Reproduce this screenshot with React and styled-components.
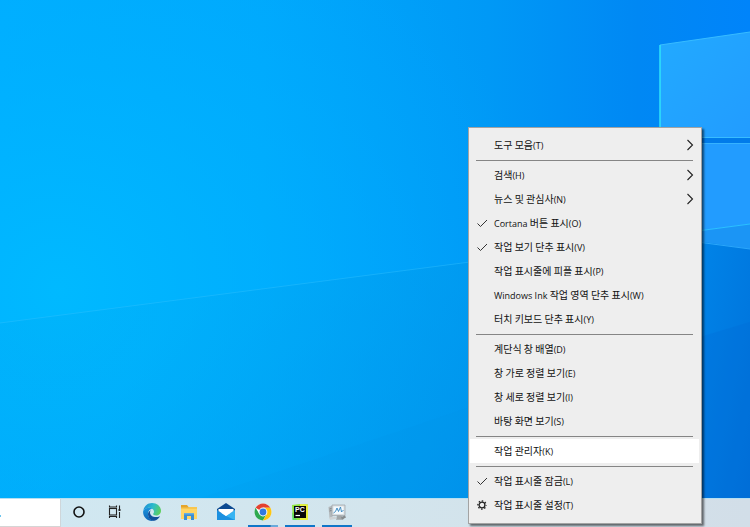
import React from 'react';
import styled, { createGlobalStyle } from 'styled-components';

const GlobalStyle = createGlobalStyle`
  * {
    box-sizing: border-box;
  }
  body {
    margin: 0;
    font-family: "Noto Sans CJK KR", "Noto Sans", sans-serif;
    overflow: hidden;
  }
`;

const Desktop = styled.div`
  position: relative;
  min-height: 100vh;
  display: flex;
  flex-direction: column;
  justify-content: flex-end;
`;

const Wallpaper = styled.svg`
  position: absolute;
  top: 0;
  left: 0;
  width: 100%;
  height: 100%;
`;

const Taskbar = styled.footer`
  position: relative;
  display: flex;
  height: 29px;
  background: linear-gradient(90deg, #d0e8f2, #d3e5ed 50%, #d2dee8);
  border-top: 1px solid #b5dff2;
`;

const SearchBox = styled.label`
  display: flex;
  align-items: center;
  width: 61px;
  background: #fff;
  border-right: 1px solid #cfd6da;
  border-bottom: 1px solid #d5d5d5;
`;

const SearchInput = styled.input`
  flex: 1;
  min-width: 0;
  border: none;
  outline: none;
  background: transparent;
`;

const TaskButton = styled.button`
  width: ${({$app}) => ($app ? '37px' : '36px')};
  padding: 0;
  border: none;
  background: transparent;
  display: flex;
  flex-direction: column;
  align-items: center;
  justify-content: flex-end;
  gap: 3px;
`;

const Running = styled.span`
  width: 30px;
  height: 2px;
  background: ${({$stacked, $on}) => {
    if (!$on) return 'transparent';
    return $stacked
      ? 'linear-gradient(90deg, #0f76c8 22px, #3f83b8 22px, #3f83b8 23px, #69aadb 23px)'
      : '#0f76c8';
  }};
`;

const Menu = styled.div`
  position: absolute;
  right: 48px;
  bottom: 3px;
  width: 234px;
  padding: 5px 2px 6px 1px;
  background: #eee;
  border: 1px solid #a3a3a3;
  box-shadow: 2px 2px 2px rgba(0, 0, 0, 0.55);
`;

const MenuItem = styled.button`
  display: grid;
  grid-template-columns: 24px 1fr 12px;
  align-items: center;
  width: 100%;
  height: 24px;
  padding: 0 4px 0 0;
  border: none;
  background: ${({$active}) => ($active ? '#fff' : 'transparent')};
  color: #111;
  font-family: inherit;
  font-size: 10px;
  line-height: 16px;
  text-align: left;
  white-space: nowrap;
`;

const Latin = styled.span`
  font-family: "Open Sans", sans-serif;
  font-size: 9px;
`;

const IconCell = styled.span`
  display: flex;
  justify-content: center;
`;

const Separator = styled.hr`
  height: 1px;
  margin: 3px 6px 2px 6px;
  border: none;
  background: #858585;
`;

const CheckIcon = () => (
  <svg width="12" height="12" viewBox="0 0 12 12" fill="none" stroke="#333" strokeWidth="1">
    <path d="M1.5 6.5L4.5 9.5L11 3" />
  </svg>
);

const ArrowIcon = () => (
  <svg width="12" height="12" viewBox="0 0 12 12" fill="none" stroke="#222" strokeWidth="1.1">
    <path d="M4.500 1L9.500 6L4.500 11" />
  </svg>
);

const GearIcon = () => (
  <svg width="12" height="12" viewBox="0 0 12 12" fill="none" stroke="#222">
    <circle cx="6" cy="6" r="2.9" strokeWidth="1.3" />
    <circle cx="6" cy="6" r="4.1" strokeWidth="1.3" strokeDasharray="1.5 1.72" strokeDashoffset="0.75" />
  </svg>
);

const CortanaIcon = () => (
  <svg width="20" height="20" viewBox="0 0 20 20" fill="none">
    <circle cx="10" cy="10" r="5" stroke="#111" strokeWidth="1.6" />
  </svg>
);

const TaskViewIcon = () => (
  <svg width="20" height="20" viewBox="0 0 20 20" fill="none" stroke="#222" strokeWidth="1.1">
    <rect x="4.5" y="6.5" width="7" height="6.5" />
    <path d="M4.5 3.5V5H11.5V3.5M4.5 16V14.5H11.5V16M14.5 3.5V7M14.5 10V16" />
    <rect x="13.5" y="7" width="2" height="2" fill="#222" stroke="none" />
  </svg>
);

const EdgeIcon = () => (
  <svg width="20" height="20" viewBox="0 0 20 20">
    <defs>
      <linearGradient id="edgeTop" x1="0" y1="0.3" x2="1" y2="0.6">
        <stop offset="0" stopColor="#1c8fd8" />
        <stop offset="0.5" stopColor="#2dbccb" />
        <stop offset="1" stopColor="#5fd05c" />
      </linearGradient>
      <linearGradient id="edgeSide" x1="0" y1="0" x2="0" y2="1">
        <stop offset="0" stopColor="#1b95de" />
        <stop offset="1" stopColor="#0f62b4" />
      </linearGradient>
    </defs>
    <path d="M1.2 9.5C1.6 4.5 5.3 1 10 1c5.200 0 9 3.700 9 7.700 0 3-2.300 4.800-4.900 4.800-1.900 0-3-.7-3-1.400 0-.6.9-.9.9-2.400C12 7.800 10 5.700 7 5.700c-2.800 0-4.900 1.600-5.800 3.800z" fill="url(#edgeTop)" />
    <path d="M1.100 9.500C2 7 4.300 5.700 7 5.700c1.400 0 2.500.4 3.400 1.100C7.800 7 6 9.200 6 11.800c0 3.500 2.500 6.400 6 7-.7.150-1.300.2-2 .2-5 0-9.200-4.300-8.900-9.500z" fill="url(#edgeSide)" />
    <path d="M8.800 8.200C7 9.200 6 10.500 6 12.200c0 3.700 3 6.600 6.300 6.600 2.400-.6 4.300-2.100 5.500-4 .2-.4-.1-.6-.5-.4-1 .5-2 .7-3.200.7-3.500 0-6.100-2-6.100-4.700 0-.8.300-1.600.8-2.200z" fill="#12509c" />
  </svg>
);

const ExplorerIcon = () => (
  <svg width="20" height="20" viewBox="0 0 20 20">
    <path d="M2 3h6l1.500 2H18v5H2z" fill="#e5a52c" />
    <path d="M2 6h16v11H2z" fill="#ffd566" />
    <path d="M2 5.500h7l1-.5h8v2H2z" fill="#f8c64f" />
    <path d="M5 18v-7h10v7h-3v-4H8v4z" fill="#3b8ed4" />
    <path d="M5 11h10v1.500H5z" fill="#64ade4" />
  </svg>
);

const MailIcon = () => (
  <svg width="20" height="20" viewBox="0 0 20 20">
    <path d="M1 7L10 1l9 6v4H1z" fill="#0c4a91" />
    <path d="M1 8v10h18V8l-9 6z" fill="#1b90e0" />
    <path d="M19 8v10L10 14z" fill="#36b4f2" />
    <path d="M2.500 7h15v2L10 14 2.500 9z" fill="#fff" />
  </svg>
);

const ChromeIcon = () => (
  <svg width="20" height="20" viewBox="0 0 20 20">
    <circle cx="10" cy="10" r="8.500" fill="#fff" />
    <path d="M10 10L2.640 5.750A8.500 8.500 0 0 1 17.360 5.750H10z" fill="#e3412f" />
    <path d="M2.640 5.750A8.500 8.500 0 0 0 10 18.500L13.680 12.120 10 10 6.320 12.120z" fill="#2da94f" />
    <path d="M17.360 5.750A8.500 8.500 0 0 1 10 18.500l3.680-6.380L10 5.750z" fill="#fdc613" />
    <circle cx="10" cy="10" r="4.400" fill="#fff" />
    <circle cx="10" cy="10" r="3.400" fill="#3079e0" />
  </svg>
);

const PyCharmIcon = () => (
  <svg width="20" height="20" viewBox="0 0 20 20">
    <path d="M2 3l8-1 8 .5V18H3z" fill="#8fe53c" />
    <path d="M10 2l8 .5V18h-8z" fill="#e9f03b" />
    <path d="M2 10l5 8H2.500z" fill="#5fdc62" />
    <rect x="4" y="4" width="12" height="12" fill="#080808" />
    <text x="5" y="10" fill="#fff" fontFamily="Liberation Sans, sans-serif" fontSize="7" fontWeight="700">PC</text>
    <path d="M5.500 13.500h4.500" stroke="#fff" strokeWidth="1.200" />
  </svg>
);

const MonitorIcon = () => (
  <svg width="20" height="20" viewBox="0 0 20 20">
    <path d="M1.500 5l4-1.500V15l-3 1z" fill="#b3b8bb" />
    <path d="M2.500 7l2-.5M2.500 9l2-.5" stroke="#6e7579" strokeWidth="0.800" />
    <path d="M5 3h13v10.500H5z" fill="#d9dddf" stroke="#9ba2a6" strokeWidth="0.700" />
    <path d="M6.500 4.500h10V12h-10z" fill="#f3fafe" />
    <path d="M6.500 11l2-1.500L10 6l1.500 3.500L13.500 5l1 5 2-2" fill="none" stroke="#3283bd" strokeWidth="0.900" />
    <path d="M10 13.500h4l3 3-1 1.200H9z" fill="#a1a6a8" />
    <path d="M2 15.500l6-1 2 2-7 1.500z" fill="#cdd1d3" />
    <path d="M14 15l4-1.500 1 2-4 2z" fill="#868b8d" />
  </svg>
);

const taskButtons = [
  { name: 'Cortana', Icon: CortanaIcon },
  { name: '작업 보기', Icon: TaskViewIcon },
  { name: 'Microsoft Edge', Icon: EdgeIcon, app: true },
  { name: '파일 탐색기', Icon: ExplorerIcon, app: true },
  { name: '메일', Icon: MailIcon, app: true },
  { name: 'Chrome', Icon: ChromeIcon, app: true, running: true, stacked: true },
  { name: 'PyCharm', Icon: PyCharmIcon, app: true, running: true },
  { name: '작업 관리자', Icon: MonitorIcon, app: true, running: true },
];

const menuGroups = [
  [{ label: '도구 모음(T)', submenu: true }],
  [
    { label: '검색(H)', submenu: true },
    { label: '뉴스 및 관심사(N)', submenu: true },
    { label: 'Cortana 버튼 표시(O)', Icon: CheckIcon },
    { label: '작업 보기 단추 표시(V)', Icon: CheckIcon },
    { label: '작업 표시줄에 피플 표시(P)' },
    { label: 'Windows Ink 작업 영역 단추 표시(W)' },
    { label: '터치 키보드 단추 표시(Y)' },
  ],
  [
    { label: '계단식 창 배열(D)' },
    { label: '창 가로 정렬 보기(E)' },
    { label: '창 세로 정렬 보기(I)' },
    { label: '바탕 화면 보기(S)' },
  ],
  [{ label: '작업 관리자(K)', active: true }],
  [
    { label: '작업 표시줄 잠금(L)', Icon: CheckIcon },
    { label: '작업 표시줄 설정(T)', Icon: GearIcon },
  ],
];

// Latin words and access keys are set smaller than the Hangul
const renderLabel = (label) =>
  label
    .split(/([A-Za-z]+(?: [A-Za-z]+)*|\([A-Z]\))/)
    .map((part, index) => (index % 2 ? <Latin key={index}>{part}</Latin> : part));

const Background = () => (
  <Wallpaper viewBox="0 0 750 527" preserveAspectRatio="xMaxYMax slice" aria-hidden="true">
    <defs>
      <linearGradient id="sky" x1="0" y1="0" x2="1" y2="0">
        <stop offset="0" stopColor="#00acff" />
        <stop offset="0.35" stopColor="#00a7fc" />
        <stop offset="0.65" stopColor="#0099f6" />
        <stop offset="0.85" stopColor="#0088f4" />
        <stop offset="1" stopColor="#0084fa" />
      </linearGradient>
      <radialGradient id="glow" gradientUnits="userSpaceOnUse" cx="60" cy="290" r="480">
        <stop offset="0" stopColor="#00bbff" stopOpacity="0.9" />
        <stop offset="1" stopColor="#00aeff" stopOpacity="0" />
      </radialGradient>
      <linearGradient id="shade" gradientUnits="userSpaceOnUse" x1="200" y1="280" x2="560" y2="540">
        <stop offset="0" stopColor="#00a4ee" stopOpacity="0.2" />
        <stop offset="1" stopColor="#008ae4" stopOpacity="0.8" />
      </linearGradient>
      <linearGradient id="corner" x1="0" y1="0" x2="1" y2="1">
        <stop offset="0" stopColor="#0086ea" />
        <stop offset="1" stopColor="#006fd8" />
      </linearGradient>
      <linearGradient id="pane" x1="0" y1="0" x2="1" y2="1">
        <stop offset="0" stopColor="#22aaff" />
        <stop offset="1" stopColor="#229cff" />
      </linearGradient>
    </defs>
    <rect width="750" height="527" fill="url(#sky)" />
    <rect width="750" height="527" fill="url(#glow)" />
    <path d="M0 323L470 262L750 210V527H0z" fill="url(#shade)" />
    <path d="M0 323L470 262" stroke="#35c3ff" strokeOpacity="0.4" />
    <path d="M200 498L470 407V498z" fill="#0083dc" fillOpacity="0.06" />
    <path d="M690 239L750 248V527H690z" fill="url(#corner)" />
    <path d="M690 340L750 322V527H690z" fill="#0066d2" fillOpacity="0.25" />
    <path d="M660 45L750 32V138H660z" fill="url(#pane)" />
    <path d="M660 45L750 32M700 137.500H750" stroke="#38bcff" fill="none" />
    <path d="M660 45V138" stroke="#2fe4fa" strokeWidth="1.500" />
    <path d="M700 138H750V143H700z" fill="#007bea" />
    <path d="M690 143H750V224L690 232z" fill="#229cff" />
    <path d="M700 143.500H750" stroke="#35b2ff" />
    <path d="M690 232L750 224V249L690 240z" fill="#1b95f5" />
    <path d="M690 232L750 224" stroke="#2cc0ff" />
    <path d="M690 241L750 249" stroke="#2ba7fb" />
  </Wallpaper>
);

const ContextMenu = () => (
  <Menu role="menu">
    {menuGroups.map((group, index) => (
      <React.Fragment key={index}>
        {index > 0 && <Separator />}
        {group.map(({label, Icon, submenu, active}) => (
          <MenuItem key={label} role="menuitem" $active={active}>
            <IconCell>{Icon && <Icon />}</IconCell>
            <span>{renderLabel(label)}</span>
            <IconCell>{submenu && <ArrowIcon />}</IconCell>
          </MenuItem>
        ))}
      </React.Fragment>
    ))}
  </Menu>
);

const App = () => {
  return (
    <>
      <GlobalStyle />
      <Desktop>
        <Background />
        <Taskbar>
          <SearchBox>
            <svg width="2" height="10" viewBox="0 0 2 10" aria-hidden="true">
              <path d="M0 7h1v2H0z" fill="#6cc4ee" />
            </svg>
            <SearchInput type="text" aria-label="검색" />
          </SearchBox>
          {taskButtons.map(({name, Icon, app, running, stacked}) => (
            <TaskButton key={name} aria-label={name} $app={app}>
              <Icon />
              <Running $on={running} $stacked={stacked} />
            </TaskButton>
          ))}
        </Taskbar>
        <ContextMenu />
      </Desktop>
    </>
  );
};

export default App;
